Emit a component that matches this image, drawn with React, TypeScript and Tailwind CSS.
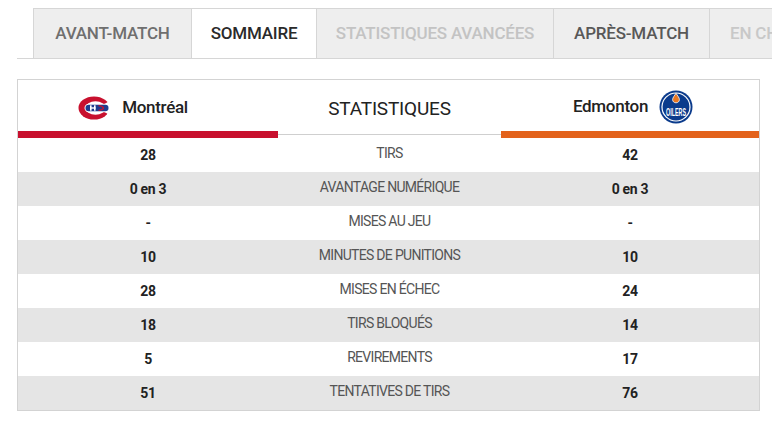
const tabs = [
  { label: "AVANT-MATCH", w: "w-[158px] justify-center", color: "text-[#6f6f6f]" },
  { label: "SOMMAIRE", w: "w-[125px] justify-center", color: "text-[#2a2a2a]", active: true },
  { label: "STATISTIQUES AVANCÉES", w: "w-[237px] justify-center", color: "text-[#c3c3c3]" },
  { label: "APRÈS-MATCH", w: "w-[156px] justify-center", color: "text-[#585858]" },
  { label: "EN CHRONOLOGIE", w: "w-[200px] justify-start pl-[20px]", color: "text-[#c8c8c8]" },
];

const rows = [
  { home: "28", label: "TIRS", away: "42" },
  { home: "0 en 3", label: "AVANTAGE NUMÉRIQUE", away: "0 en 3" },
  { home: "-", label: "MISES AU JEU", away: "-" },
  { home: "10", label: "MINUTES DE PUNITIONS", away: "10" },
  { home: "28", label: "MISES EN ÉCHEC", away: "24" },
  { home: "18", label: "TIRS BLOQUÉS", away: "14" },
  { home: "5", label: "REVIREMENTS", away: "17" },
  { home: "51", label: "TENTATIVES DE TIRS", away: "76" },
];

function HabsLogo() {
  return (
    <svg width="33" height="24" viewBox="0 0 33 24">
      <ellipse cx="16" cy="12" rx="15.5" ry="11.5" fill="#c8102e" />
      <ellipse cx="17.5" cy="12" rx="10" ry="6.8" fill="#ffffff" />
      <polygon points="20,12 33,4 33,20" fill="#ffffff" />
      <rect x="6.5" y="7.8" width="25" height="8.4" rx="4.2" fill="#ffffff" />
      <rect x="7.5" y="8.8" width="23" height="6.4" rx="3.2" fill="#1e3c8f" />
      <rect x="12" y="9.3" width="1.6" height="5.4" fill="#ffffff" />
      <rect x="16" y="9.3" width="1.6" height="5.4" fill="#ffffff" />
      <rect x="12" y="11.3" width="5.6" height="1.4" fill="#ffffff" />
      <path d="M20.5 9.6 C23 9.6 24.8 10.6 25.6 12 C24.8 13.4 23 14.4 20.5 14.4" stroke="#c8102e" strokeWidth="1.4" fill="none" />
    </svg>
  );
}

function OilersLogo() {
  return (
    <svg width="34" height="34" viewBox="0 0 34 34">
      <circle cx="17" cy="17" r="16.5" fill="#0b3b8c" />
      <circle cx="17" cy="17" r="14.6" fill="#ffffff" />
      <circle cx="17" cy="17" r="13.4" fill="#0b3b8c" />
      <path d="M17 3.2 C18.6 6 20.4 7.6 20.4 9.6 C20.4 11.6 18.9 12.8 17 12.8 C15.1 12.8 13.6 11.6 13.6 9.6 C13.6 7.6 15.4 6 17 3.2 Z" fill="#e87722" stroke="#ffffff" strokeWidth="0.8" />
      <text
        x="17"
        y="25.5"
        textAnchor="middle"
        fontFamily="Liberation Sans, sans-serif"
        fontWeight="700"
        fontSize="10"
        fill="#ffffff"
        textLength="20"
        lengthAdjust="spacingAndGlyphs"
      >
        OILERS
      </text>
    </svg>
  );
}

export default function App() {
  return (
    <div className="w-[772px] h-[424px] overflow-hidden bg-white font-['Roboto',sans-serif]">
      {/* onglets */}
      <div className="pt-[8px] pl-[17px]">
        <div className="flex border-b border-[#d6d6d6] pl-[16px] h-[51px] overflow-hidden">
          {tabs.map((tab) => (
            <div
              key={tab.label}
              className={`${tab.w} shrink-0 h-[51px] flex items-center border-t border-l border-[#d6d6d6] whitespace-nowrap text-[17px] font-medium tracking-[-0.2px] ${tab.color} ${
                tab.active ? "bg-white -mb-px border-b border-b-white" : "bg-[#eeeeee]"
              }`}
            >
              {tab.label}
            </div>
          ))}
        </div>
      </div>

      {/* tableau */}
      <div className="mt-[20px] ml-[17px] w-[743px] border border-[#d3d3d3]">
        <div className="grid grid-cols-[260px_223px_258px] h-[58px]">
          <div className="flex flex-col">
            <div className="flex-1 flex items-center justify-center gap-[11px] pr-[30px] pt-[4px]">
              <HabsLogo />
              <span className="text-[17px] font-medium text-[#222] tracking-[-0.3px]">Montréal</span>
            </div>
            <div className="h-[7px] bg-[#c8102e]" />
          </div>
          <div className="flex flex-col">
            <div className="flex-1 flex items-center justify-center pt-[8px]">
              <span className="text-[19px] text-[#222] tracking-[-0.2px]">STATISTIQUES</span>
            </div>
            <div className="h-[7px] flex items-center">
              <div className="h-px w-full bg-[#cfcfcf]" />
            </div>
          </div>
          <div className="flex flex-col">
            <div className="flex-1 flex items-center justify-center gap-[11px] pl-[6px] pt-[2px]">
              <span className="text-[17px] font-medium text-[#222] tracking-[-0.3px]">Edmonton</span>
              <OilersLogo />
            </div>
            <div className="h-[7px] bg-[#e3621b]" />
          </div>
        </div>

        {rows.map((row, i) => (
          <div
            key={row.label}
            className={`grid grid-cols-[260px_223px_258px] h-[34px] items-center ${
              i % 2 === 1 ? "bg-[#e5e5e5]" : "bg-white"
            }`}
          >
            <div className="text-center text-[14px] font-bold text-[#222] tracking-[-0.3px]">{row.home}</div>
            <div className="text-center text-[14px] text-[#555] tracking-[-0.7px] pb-[3px]">{row.label}</div>
            <div className="text-center text-[14px] font-bold text-[#222] tracking-[-0.3px]">{row.away}</div>
          </div>
        ))}
      </div>
    </div>
  );
}
